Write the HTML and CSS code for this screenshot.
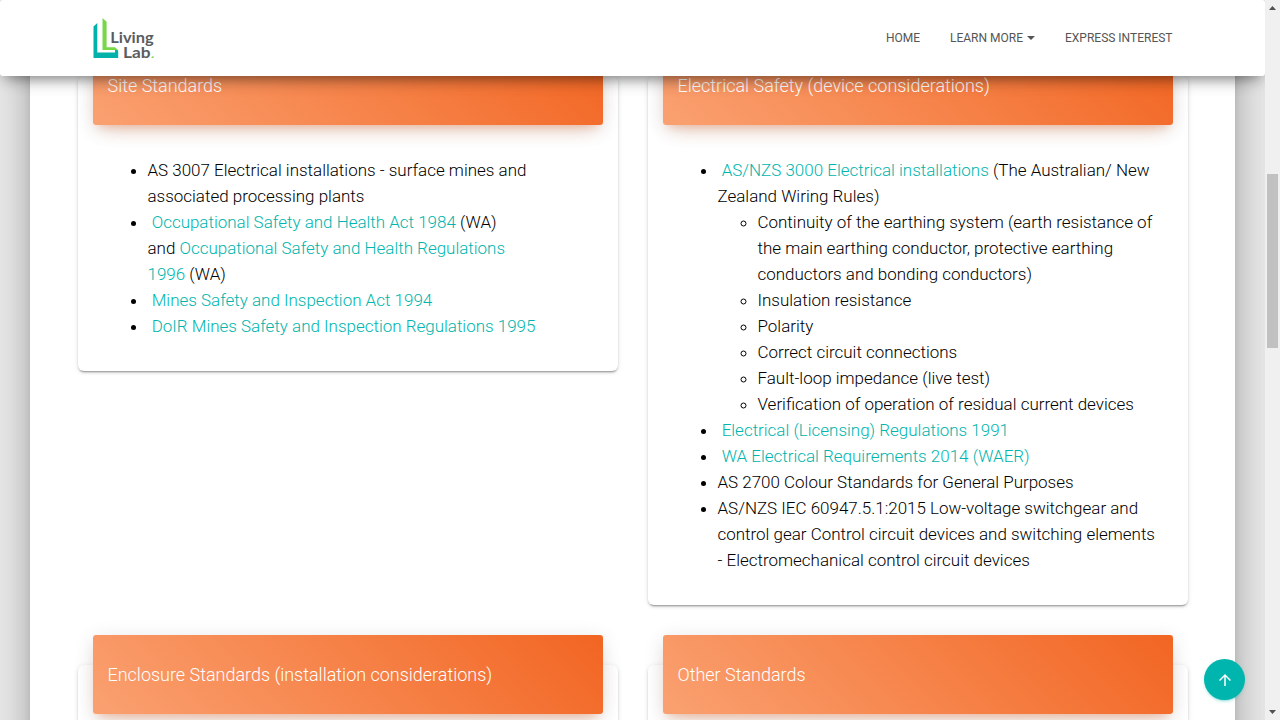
FILE: index.html
```html
<!DOCTYPE html>
<html lang="en">
<head>
<meta charset="utf-8">
<title>Living Lab</title>
<link rel="stylesheet" href="styles.css">
</head>
<body>
<div class="window">
  <div class="page">
    <nav class="navbar">
      <svg class="logo" width="64" height="44" viewBox="0 0 64 44" role="img" aria-label="Living Lab">
        <path d="M2.500 10.500L6.300 7V36.500H24V33L27.200 34.500V42H2.500Z" fill="#00b2a9"/>
        <path d="M11.500 2L15.600 5.800V31.200H24L27.200 34H11.500Z" fill="#78d64b"/>
        <text class="logo-text" x="19.200" y="27" textLength="43.500" lengthAdjust="spacingAndGlyphs">Living</text>
        <text class="logo-text" x="32" y="41.800" textLength="27.500" lengthAdjust="spacingAndGlyphs">Lab</text>
        <path d="M62.500 39.500V42H60Z" fill="#78d64b"/>
      </svg>
      <div class="links">
        <a>HOME</a>
        <a>LEARN MORE<span class="caret"></span></a>
        <a>EXPRESS INTEREST</a>
      </div>
    </nav>
    <main class="main">
      <div class="grid">
        <section class="card">
          <h4 class="card-header">Site Standards</h4>
          <ul class="list">
            <li>AS 3007 Electrical installations - surface mines and<br>associated processing plants</li>
            <li>&nbsp;<a>Occupational Safety and Health Act 1984</a> (WA)<br>and <a>Occupational Safety and Health Regulations<br>1996</a> (WA)</li>
            <li>&nbsp;<a>Mines Safety and Inspection Act 1994</a></li>
            <li>&nbsp;<a>DoIR Mines Safety and Inspection Regulations 1995</a></li>
          </ul>
        </section>
        <section class="card">
          <h4 class="card-header">Electrical Safety (device considerations)</h4>
          <ul class="list">
            <li>&nbsp;<a>AS/NZS 3000 Electrical installations</a> (The Australian/ New<br>Zealand Wiring Rules)
              <ul>
                <li>Continuity of the earthing system (earth resistance of<br>the main earthing conductor, protective earthing<br>conductors and bonding conductors)</li>
                <li>Insulation resistance</li>
                <li>Polarity</li>
                <li>Correct circuit connections</li>
                <li>Fault-loop impedance (live test)</li>
                <li>Verification of operation of residual current devices</li>
              </ul>
            </li>
            <li>&nbsp;<a>Electrical (Licensing) Regulations 1991</a></li>
            <li>&nbsp;<a>WA Electrical Requirements 2014 (WAER)</a></li>
            <li>AS 2700 Colour Standards for General Purposes</li>
            <li>AS/NZS IEC 60947.5.1:2015 Low-voltage switchgear and<br>control gear Control circuit devices and switching elements<br>- Electromechanical control circuit devices</li>
          </ul>
        </section>
        <section class="card">
          <h4 class="card-header">Enclosure Standards (installation considerations)</h4>
          <div class="rest"></div>
        </section>
        <section class="card">
          <h4 class="card-header">Other Standards</h4>
          <div class="rest"></div>
        </section>
      </div>
    </main>
    <div class="to-top">
      <svg width="18" height="18" viewBox="0 0 24 24"><path d="M4 12l1.410 1.410L11 7.830V20h2V7.830l5.580 5.590L20 12l-8-8-8 8z" fill="#fff"/></svg>
    </div>
  </div>
  <div class="scrollbar">
    <svg width="15" height="15" viewBox="0 0 15 15"><path d="M4 10L7.500 6L11 10Z" fill="#505050"/></svg>
    <div class="track"><div class="thumb"></div></div>
    <svg width="15" height="15" viewBox="0 0 15 15"><path d="M4 5L7.500 9L11 5Z" fill="#505050"/></svg>
  </div>
</div>
</body>
</html>
```
FILE: styles.css
```css
* { box-sizing: border-box; }
body {
  margin: 0;
  overflow: hidden;
  font-family: Roboto, sans-serif;
  font-weight: 300;
  color: #000;
}
.window { display: flex; height: 720px; }
.page {
  position: relative;
  width: 1265px;
  height: 720px;
  overflow: hidden;
  background: #e5e5e5;
}
.navbar {
  position: absolute;
  z-index: 2;
  top: 0;
  left: 0;
  width: 100%;
  height: 76px;
  padding: 0 92.5px 0 91px;
  display: flex;
  justify-content: space-between;
  align-items: center;
  background: #fff;
  border-radius: 3px;
  box-shadow: 0 10px 20px -12px rgba(0,0,0,.42), 0 3px 20px 0 rgba(0,0,0,.12), 0 8px 10px -5px rgba(0,0,0,.2);
}
.logo-text {
  font-family: Lato, sans-serif;
  font-size: 14.500px;
  font-weight: 700;
  fill: #5a5d5f;
}
.links {
  display: flex;
  gap: 30px;
  font-size: 12px;
  font-weight: 400;
  line-height: 20px;
  color: #555;
}
.caret {
  display: inline-block;
  margin-left: 4px;
  vertical-align: 2px;
  border-top: 4px solid #555;
  border-left: 4px solid transparent;
  border-right: 4px solid transparent;
}
.main {
  height: 1400px;
  margin: 0 30px;
  background: #fff;
  box-shadow: 0 16px 24px 2px rgba(0,0,0,.14), 0 6px 30px 5px rgba(0,0,0,.12), 0 8px 10px -5px rgba(0,0,0,.2);
}
.grid {
  width: 1110px;
  margin: 0 auto;
  padding-top: 76px;
  display: grid;
  grid-template-columns: 540px 540px;
  column-gap: 30px;
  row-gap: 60px;
  align-items: start;
}
.card {
  border-radius: 6px;
  background: #fff;
  box-shadow: 0 2px 2px 0 rgba(0,0,0,.14), 0 3px 1px -2px rgba(0,0,0,.2), 0 1px 5px 0 rgba(0,0,0,.12);
}
.card-header {
  position: relative;
  height: 79px;
  margin: -30px 15px 0;
  padding: 26px 15px 0;
  border-radius: 3px;
  font-size: 17.980px;
  font-weight: 300;
  line-height: 27px;
  color: #fff;
  background: linear-gradient(45deg, #faa171, #f26522);
  box-shadow: 0 12px 20px -10px rgba(242,101,34,.28), 0 4px 20px 0 rgba(0,0,0,.12), 0 7px 8px -5px rgba(242,101,34,.2);
}
.list {
  margin: 0;
  padding: 32px 0 32px 70px;
  font-size: 16.980px;
  line-height: 26px;
  white-space: nowrap;
}
.list ul { margin: 0; padding-left: 40px; }
.list a { color: #00b5ad; }
.rest { height: 300px; }
.to-top {
  position: absolute;
  z-index: 3;
  right: 20px;
  bottom: 20px;
  width: 41px;
  height: 41px;
  display: flex;
  align-items: center;
  justify-content: center;
  border-radius: 50%;
  background: #00b5ad;
  box-shadow: 0 2px 2px 0 rgba(0,181,173,.14), 0 3px 1px -2px rgba(0,181,173,.2), 0 1px 5px 0 rgba(0,181,173,.12);
}
.scrollbar {
  width: 15px;
  display: flex;
  flex-direction: column;
  background: #f0f0f0;
}
.track { flex: 1; padding: 159px 2px 0; }
.thumb { height: 174px; background: #c1c1c1; }
```
